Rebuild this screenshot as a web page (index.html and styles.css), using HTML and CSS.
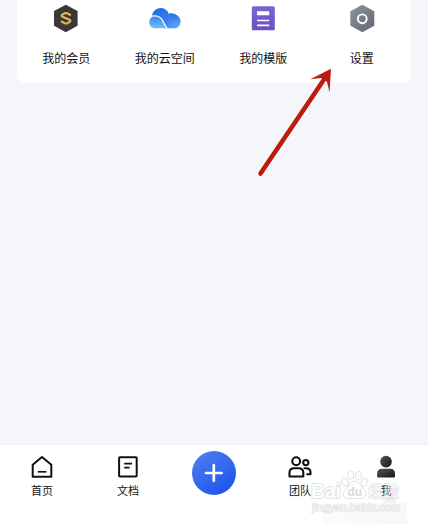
FILE: index.html
```
<!DOCTYPE html>
<html lang="zh-CN">
<head>
  <meta charset="UTF-8">
  <meta name="viewport" content="width=device-width, initial-scale=1.0">
  <title>我的</title>
  <link rel="stylesheet" href="styles.css">
</head>
<body>
  <main class="content">
    <div class="menu-card">
      <a class="menu-item">
        <svg class="menu-icon" viewBox="0 0 32 32">
          <path d="M15.8 5.8 26.6 11.6V25.2L15.8 31 5 25.2V11.6Z" fill="#393836" stroke="#393836" stroke-width="2" stroke-linejoin="round"/>
          <path d="M20.8 15.2 17.2 13.3Q16 12.7 14.8 13.3L12.3 14.6Q10.8 15.7 12.5 16.7L19.5 19.7Q21.2 20.7 19.7 21.9L17.2 23.2Q16 23.8 14.8 23.2L11 21.3" fill="none" stroke="#e2b457" stroke-width="2.2"/>
        </svg>
        <span>我的会员</span>
      </a>
      <a class="menu-item">
        <svg class="menu-icon" viewBox="0 0 32 32">
          <defs>
            <linearGradient id="cloudBack" x1="0" y1="0" x2="1" y2="1">
              <stop offset="0" stop-color="#2569e5"/>
              <stop offset="0.55" stop-color="#397de9"/>
              <stop offset="1" stop-color="#65b0f7"/>
            </linearGradient>
            <linearGradient id="cloudFront" x1="0" y1="0" x2="0" y2="1">
              <stop offset="0" stop-color="#3e80ed"/>
              <stop offset="1" stop-color="#73c0fb"/>
            </linearGradient>
            <linearGradient id="cloudSide" x1="0" y1="0" x2="0.4" y2="1">
              <stop offset="0" stop-color="#2264df"/>
              <stop offset="1" stop-color="#5ba6f4"/>
            </linearGradient>
          </defs>
          <path d="M3.3 16.2C3 11.8 7 8 11.4 8 15.3 8 18.5 10 20 13.9 25 12.6 31.4 15.8 31.4 21.5 31.4 25.8 28.5 28.3 25 28.3H15.5Z" fill="url(#cloudBack)"/>
          <path d="M20 13.9C25 12.6 31.4 15.8 31.4 21.5 31.4 25.5 28.5 28.3 25.5 28.3 29 25 23.5 16.5 20 13.9Z" fill="url(#cloudSide)"/>
          <path d="M6.5 15.7C11.5 15.7 13.5 20 14.8 22.8 16 25.4 17.2 27.2 18.5 28.3H6.2C-1.8 28-1.7 16.2 6.5 15.7Z" fill="url(#cloudFront)"/>
          <path d="M3.3 16.2C9.2 14.8 12.7 18.1 14.5 22.2 15.8 25.2 17 27.2 18.5 28.4" fill="none" stroke="#fff" stroke-width="1.2"/>
        </svg>
        <span>我的云空间</span>
      </a>
      <a class="menu-item">
        <svg class="menu-icon" viewBox="0 0 32 32">
          <defs>
            <linearGradient id="template" x1="0" y1="0" x2="0" y2="1">
              <stop offset="0" stop-color="#7b64d8"/>
              <stop offset="1" stop-color="#6752be"/>
            </linearGradient>
          </defs>
          <rect x="4.8" y="6.2" width="23" height="24" rx="1.5" fill="url(#template)"/>
          <path d="M10 11.3H22.2V15.3H10ZM10 19.7H22.2V21.3H10ZM10 24.5H22.2V26.2H10Z" fill="#fff"/>
        </svg>
        <span>我的模版</span>
      </a>
      <a class="menu-item">
        <svg class="menu-icon" viewBox="0 0 32 32">
          <defs>
            <linearGradient id="gear" x1="0" y1="0" x2="1" y2="1">
              <stop offset="0" stop-color="#8b919d"/>
              <stop offset="1" stop-color="#626974"/>
            </linearGradient>
          </defs>
          <path d="M16.3 6 27.3 11.8V25.2L16.3 31 5.3 25.2V11.8Z" fill="url(#gear)" stroke="url(#gear)" stroke-width="2" stroke-linejoin="round"/>
          <circle cx="16.3" cy="18.8" r="4.4" fill="none" stroke="#fff" stroke-width="1.9"/>
        </svg>
        <span>设置</span>
      </a>
    </div>
  </main>

  <nav class="tab-bar">
    <a class="tab">
      <svg class="tab-icon" viewBox="0 0 28 28">
        <path d="M4.7 11.8 14 4 23.3 11.8V23.8H4.7Z" fill="none" stroke="#111" stroke-width="2" stroke-linejoin="round"/>
        <path d="M9.8 18.8H18.4" stroke="#111" stroke-width="1.7"/>
      </svg>
      <span>首页</span>
    </a>
    <a class="tab">
      <svg class="tab-icon" viewBox="0 0 28 28">
        <rect x="5.1" y="4.3" width="17.6" height="19.3" rx="0.8" fill="none" stroke="#111" stroke-width="2"/>
        <path d="M10.2 10.7H18M10.2 14.6H15.6" stroke="#111" stroke-width="1.8"/>
      </svg>
      <span>文档</span>
    </a>
    <div class="tab tab-add">
      <button class="add-btn" aria-label="+">
        <svg viewBox="0 0 44 44">
          <path d="M21.8 14.2V29.8M14 22H29.6" stroke="#fff" stroke-width="2.7" stroke-linecap="round"/>
        </svg>
      </button>
    </div>
    <a class="tab">
      <svg class="tab-icon" viewBox="0 0 28 28" fill="none" stroke="#111" stroke-width="2.1" stroke-linejoin="round">
        <circle cx="10.2" cy="8.2" r="3.9"/>
        <circle cx="19.8" cy="9.6" r="2.6"/>
        <path d="M3.5 23.5V19.8Q3.5 15.2 8 15.2H12.8Q17.3 15.2 17.3 19.8V23.5Z"/>
        <path d="M17.7 15.2H19.7Q24.5 15.2 24.5 19.2V21.3H20.4"/>
      </svg>
      <span>团队</span>
    </a>
    <a class="tab">
      <svg class="tab-icon" viewBox="0 0 28 28">
        <defs>
          <linearGradient id="me" x1="0" y1="0" x2="1" y2="1">
            <stop offset="0" stop-color="#555"/>
            <stop offset="1" stop-color="#151515"/>
          </linearGradient>
        </defs>
        <circle cx="14" cy="8.6" r="5.8" fill="url(#me)"/>
        <path d="M5.1 23.6V20.9Q5.1 15.8 10.2 15.8H17.9Q23 15.8 23 20.9V23.6Q23 24.6 22 24.6H6.1Q5.1 24.6 5.1 23.6Z" fill="url(#me)"/>
      </svg>
      <span>我</span>
    </a>
  </nav>

  <!-- pointer to the settings entry -->
  <svg class="arrow" viewBox="0 0 90 125">
    <path d="M10.5 113.5 73 21" stroke="#be1a0f" stroke-width="4.6" stroke-linecap="round"/>
    <path d="M81 8.8 60.3 19.2 71 18 77 22 79.5 32.5Z" fill="#be1a0f"/>
  </svg>

  <div class="shade"></div>
  <svg class="watermark" viewBox="0 0 100 54">
    <g class="mark-text">
      <text x="0" y="28" font-size="20" textLength="30" lengthAdjust="spacingAndGlyphs">Bai</text>
      <text class="mark-cn" x="57" y="27" font-size="16" textLength="31" lengthAdjust="spacingAndGlyphs">经验</text>
      <text class="mark-url" x="1" y="41" font-size="11" textLength="88" lengthAdjust="spacingAndGlyphs">jingyan.baidu.com</text>
    </g>
    <g class="mark-paw">
      <ellipse cx="34" cy="12" rx="2.9" ry="4.2" transform="rotate(-18 34 12)"/>
      <ellipse cx="39.7" cy="5" rx="2.9" ry="4.2"/>
      <ellipse cx="47.5" cy="5.5" rx="2.9" ry="4.2"/>
      <ellipse cx="53.2" cy="12.5" rx="2.9" ry="4.2" transform="rotate(18 53.2 12.5)"/>
      <path d="M43.5 11Q47.5 11 49.5 15L54 20Q56 23 54.5 26 52.5 29.5 48.5 28.5H38.5Q34 29.5 32.5 25.5 31.5 22 34.5 19.5L38 15Q40 11 43.5 11Z"/>
    </g>
    <text class="mark-du" x="36.5" y="26" font-size="13" textLength="14.5" lengthAdjust="spacingAndGlyphs">du</text>
  </svg>
</body>
</html>
```
FILE: styles.css
```
* {
  box-sizing: border-box;
}

body {
  position: relative;
  display: flex;
  flex-direction: column;
  width: 428px;
  height: 524px;
  margin: 0;
  overflow: hidden;
  background: #f4f6fa;
  font-family: "Noto Sans CJK SC", sans-serif;
  color: #111;
}

.content {
  flex: 1;
  padding: 0 17px;
}

.menu-card {
  display: flex;
  height: 83px;
  background: #fff;
  border-radius: 0 0 9px 9px;
}

.menu-item {
  flex: 1;
  display: flex;
  flex-direction: column;
  align-items: center;
  gap: 16px;
  font-size: 12px;
  line-height: 20px;
}

.menu-icon {
  width: 32px;
  height: 32px;
}

.tab-bar {
  display: flex;
  height: 80px;
  margin: 0 -1px;
  background: #fff;
  border-top: 1px solid #eff0f3;
}

.tab {
  flex: 1;
  display: flex;
  flex-direction: column;
  align-items: center;
  padding-top: 8px;
  font-size: 11px;
  line-height: 18px;
}

.tab-icon {
  width: 28px;
  height: 28px;
}

.tab-add {
  padding-top: 6px;
}

.add-btn {
  width: 44px;
  height: 44px;
  padding: 0;
  border: none;
  border-radius: 50%;
  background: linear-gradient(145deg, #4f7eec 5%, #2057ee 85%);
}

.add-btn svg {
  display: block;
  width: 100%;
}

.arrow {
  position: absolute;
  left: 250px;
  top: 60px;
  width: 90px;
  height: 125px;
}

.shade {
  position: absolute;
  left: 323px;
  top: 503px;
  width: 84px;
  height: 21px;
  background: linear-gradient(90deg, rgba(0, 0, 0, 0.015), rgba(0, 0, 0, 0.03));
}

.shade::before {
  content: "";
  position: absolute;
  left: 60px;
  top: -6px;
  width: 13px;
  height: 6px;
  background: rgba(0, 0, 0, 0.06);
}

.watermark {
  position: absolute;
  left: 311px;
  top: 470px;
  width: 100px;
  height: 54px;
}

.mark-text {
  font-family: "Liberation Sans", "Noto Sans CJK SC", sans-serif;
  font-weight: bold;
  fill: #fff;
  stroke: #dadada;
  stroke-width: 1.6px;
  stroke-linejoin: round;
  paint-order: stroke;
}

.mark-cn {
  fill: rgba(255, 255, 255, 0.5);
  stroke: rgba(185, 185, 185, 0.5);
  stroke-width: 0.8px;
}

.mark-url {
  font-weight: normal;
  fill: #f4f4f4;
  stroke: #dedede;
  stroke-width: 1.1px;
}

.mark-paw {
  fill: rgba(255, 255, 255, 0.6);
  stroke: #dcdcdc;
  stroke-width: 0.9px;
}

.mark-du {
  font-family: "Liberation Sans", sans-serif;
  font-weight: bold;
  fill: #dadada;
}
```
